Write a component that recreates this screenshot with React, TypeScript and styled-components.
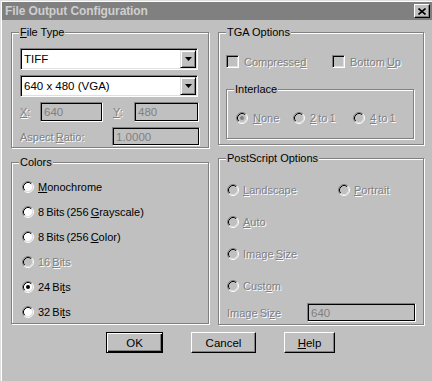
import styled, { createGlobalStyle } from "styled-components";

const GlobalStyle = createGlobalStyle`
  html, body {
    margin: 0;
    padding: 0;
    background: #c0c0c0;
    overflow: hidden;
  }
  body {
    font-family: "Liberation Sans", Arial, sans-serif;
    font-size: 11px;
    color: #000;
  }
`;

const Window = styled.div`
  width: 432px;
  height: 381px;
  box-sizing: border-box;
  background: #c0c0c0;
  border-left: 1px solid #dfdfdf;
  border-top: 1px solid #dfdfdf;
  box-shadow: inset 1px 1px 0 #fff;
  padding: 1px 0 0 1px;
  display: flex;
  flex-direction: column;
`;

const TitleBar = styled.div`
  height: 18px;
  flex-shrink: 0;
  background: #808080;
  display: flex;
  align-items: center;
  justify-content: space-between;
  padding: 0 2px 0 3px;
`;

const Title = styled.span`
  color: #cfcfcf;
  font-weight: bold;
  font-size: 12px;
  letter-spacing: -0.1px;
`;

const CloseButton = styled.div`
  width: 16px;
  height: 14px;
  box-sizing: border-box;
  background: #c0c0c0;
  border: 1px solid;
  border-color: #fff #000 #000 #fff;
  box-shadow: inset -1px -1px 0 #808080;
  display: flex;
  align-items: center;
  justify-content: center;
`;

const Body = styled.div`
  padding: 12px 0 0 9px;
  display: flex;
  flex-direction: column;
`;

const Columns = styled.div`
  display: grid;
  grid-template-columns: 198px 206px;
  column-gap: 9px;
`;

const Column = styled.div<{ $gap: number }>`
  display: flex;
  flex-direction: column;
  gap: ${(p) => p.$gap}px;
`;

const Group = styled.div<{ $h: number; $pad: string }>`
  position: relative;
  box-sizing: border-box;
  height: ${(p) => p.$h}px;
  padding: ${(p) => p.$pad};
  border: 1px solid #808080;
  box-shadow: inset 1px 1px 0 #fff, 1px 1px 0 #fff;
`;

const Legend = styled.span`
  position: absolute;
  top: -7px;
  left: 7px;
  padding: 0 1px;
  line-height: 13px;
  background: #c0c0c0;
  white-space: nowrap;
`;

const Label = styled.span<{ $disabled?: boolean }>`
  white-space: nowrap;
  word-spacing: -1px;
  color: ${(p) => (p.$disabled ? "#808080" : "#000")};
  text-shadow: ${(p) => (p.$disabled ? "1px 1px 0 #fff" : "none")};
`;

const FieldLabel = styled(Label)<{ $w: number }>`
  width: ${(p) => p.$w}px;
  flex-shrink: 0;
`;

const Select = styled.div`
  width: 178px;
  height: 22px;
  box-sizing: border-box;
  background: #fff;
  border: 1px solid;
  border-color: #808080 #fff #fff #808080;
  box-shadow: inset 1px 1px 0 #000, inset -1px -1px 0 #dfdfdf;
  padding: 1px 1px 1px 3px;
  display: flex;
  align-items: center;
  justify-content: space-between;
  font-size: 11.5px;
`;

const ArrowButton = styled.div`
  width: 16px;
  height: 18px;
  box-sizing: border-box;
  background: #c0c0c0;
  border: 1px solid;
  border-color: #dfdfdf #000 #000 #dfdfdf;
  box-shadow: inset 1px 1px 0 #fff, inset -1px -1px 0 #808080;
  display: flex;
  align-items: center;
  justify-content: center;
`;

const Stack = styled.div`
  display: flex;
  flex-direction: column;
  gap: 5px;
`;

const FieldRow = styled.div`
  display: flex;
  align-items: center;
`;

const TextField = styled.div<{ $w: number; $h: number }>`
  width: ${(p) => p.$w}px;
  height: ${(p) => p.$h}px;
  flex-shrink: 0;
  box-sizing: border-box;
  border: 1px solid;
  border-color: #808080 #fff #fff #808080;
  box-shadow: inset 1px 1px 0 #000, inset -1px -1px 0 #000;
  color: #808080;
  padding: 0 3px;
  display: flex;
  align-items: center;
  font-size: 11.5px;
`;

const RadioList = styled.div<{ $row: number }>`
  display: grid;
  grid-auto-rows: ${(p) => p.$row}px;
  align-items: center;
`;

const Option = styled.label<{ $gap: number; $w?: number }>`
  display: flex;
  align-items: center;
  gap: ${(p) => p.$gap}px;
  width: ${(p) => (p.$w ? `${p.$w}px` : "auto")};
  flex-shrink: 0;
`;

const OptionRow = styled.div<{ $h?: number }>`
  display: flex;
  align-items: center;
  height: ${(p) => (p.$h ? `${p.$h}px` : "auto")};
`;

const CheckBox = styled.span<{ $disabled?: boolean }>`
  width: 13px;
  height: 13px;
  box-sizing: border-box;
  flex-shrink: 0;
  background: ${(p) => (p.$disabled ? "#c0c0c0" : "#fff")};
  border: 1px solid;
  border-color: #808080 #fff #fff #808080;
  box-shadow: inset 1px 1px 0 #000, inset -1px -1px 0 #dfdfdf;
`;

const SubGroup = styled(Group)`
  margin-top: 21px;
  width: 188px;
`;

const ButtonRow = styled.div`
  display: flex;
  justify-content: center;
  gap: 28px;
  padding-top: 7px;
  padding-right: 2px;
`;

const Button = styled.div<{ $w: number; $default?: boolean }>`
  width: ${(p) => p.$w}px;
  height: 21px;
  box-sizing: border-box;
  background: #c0c0c0;
  border: 1px solid;
  border-color: ${(p) => (p.$default ? "#000" : "#fff #000 #000 #fff")};
  box-shadow: ${(p) =>
    p.$default
      ? "inset 1px 1px 0 #fff, inset -1px -1px 0 #000, inset -2px -2px 0 #808080"
      : "inset -1px -1px 0 #808080"};
  display: flex;
  align-items: center;
  justify-content: center;
  font-size: 11.5px;
`;

const Radio = ({ checked, disabled }: { checked?: boolean; disabled?: boolean }) => (
  <svg width="12" height="12" viewBox="0 0 12 12" style={{ flexShrink: 0 }}>
    <circle cx="6" cy="6" r="4.5" fill={disabled ? "#c0c0c0" : "#fff"} />
    <path d="M2.11 9.89 A5.5 5.5 0 0 1 9.89 2.11" stroke="#808080" fill="none" />
    <path d="M9.89 2.11 A5.5 5.5 0 0 1 2.11 9.89" stroke="#fff" fill="none" />
    <path d="M2.82 9.18 A4.5 4.5 0 0 1 9.18 2.82" stroke="#000" fill="none" />
    <path d="M9.18 2.82 A4.5 4.5 0 0 1 2.82 9.18" stroke="#dfdfdf" fill="none" />
    {checked && <circle cx="6" cy="6" r="2" fill={disabled ? "#808080" : "#000"} />}
  </svg>
);

const Arrow = () => (
  <svg width="7" height="4" viewBox="0 0 7 4">
    <path d="M0 0 H7 L3.5 4 Z" fill="#000" />
  </svg>
);

const CloseIcon = () => (
  <svg width="8" height="7" viewBox="0 0 8 7">
    <path d="M0.5 0.5 L7.5 6.5 M7.5 0.5 L0.5 6.5" stroke="#000" strokeWidth="1.6" />
  </svg>
);

const App = () => {
  return (
    <Window>
      <GlobalStyle />
      <TitleBar>
        <Title>File Output Configuration</Title>
        <CloseButton>
          <CloseIcon />
        </CloseButton>
      </TitleBar>
      <Body>
        <Columns>
          <Column $gap={14}>
            <Group $h={116} $pad="15px 0 0 8px">
              <Legend>
                <u>F</u>ile Type
              </Legend>
              <Stack>
                <Select>
                  <span>TIFF</span>
                  <ArrowButton>
                    <Arrow />
                  </ArrowButton>
                </Select>
                <Select>
                  <span>640 x 480 (VGA)</span>
                  <ArrowButton>
                    <Arrow />
                  </ArrowButton>
                </Select>
                <FieldRow>
                  <FieldLabel $w={20} $disabled>
                    <u>X</u>:
                  </FieldLabel>
                  <TextField $w={63} $h={20}>640</TextField>
                  <FieldLabel $w={21} $disabled style={{ marginLeft: 10 }}>
                    <u>Y</u>:
                  </FieldLabel>
                  <TextField $w={65} $h={20}>480</TextField>
                </FieldRow>
                <FieldRow>
                  <FieldLabel $w={92} $disabled>
                    Aspect <u>R</u>atio:
                  </FieldLabel>
                  <TextField $w={88} $h={19}>1.0000</TextField>
                </FieldRow>
              </Stack>
            </Group>
            <Group $h={162} $pad="11px 0 0 10px">
              <Legend>Colors</Legend>
              <RadioList $row={25}>
                <Option $gap={4}>
                  <Radio />
                  <Label>
                    <u>M</u>onochrome
                  </Label>
                </Option>
                <Option $gap={4}>
                  <Radio />
                  <Label>
                    8 Bits (256 <u>G</u>rayscale)
                  </Label>
                </Option>
                <Option $gap={4}>
                  <Radio />
                  <Label>
                    8 Bits (256 <u>C</u>olor)
                  </Label>
                </Option>
                <Option $gap={4}>
                  <Radio disabled />
                  <Label $disabled>
                    16 <u>B</u>its
                  </Label>
                </Option>
                <Option $gap={4}>
                  <Radio checked />
                  <Label>
                    24 Bi<u>t</u>s
                  </Label>
                </Option>
                <Option $gap={4}>
                  <Radio />
                  <Label>
                    32 Bi<u>t</u>s
                  </Label>
                </Option>
              </RadioList>
            </Group>
          </Column>
          <Column $gap={13}>
            <Group $h={113} $pad="22px 0 0 7px">
              <Legend>TGA Options</Legend>
              <OptionRow $h={13}>
                <Option $gap={5} $w={106}>
                  <CheckBox $disabled />
                  <Label $disabled>
                    Compresse<u>d</u>
                  </Label>
                </Option>
                <Option $gap={5}>
                  <CheckBox $disabled />
                  <Label $disabled>
                    Bottom <u>U</u>p
                  </Label>
                </Option>
              </OptionRow>
              <SubGroup $h={50} $pad="22px 0 0 9px">
                <Legend>Interlace</Legend>
                <OptionRow $h={12}>
                  <Option $gap={5} $w={57}>
                    <Radio checked disabled />
                    <Label $disabled>
                      <u>N</u>one
                    </Label>
                  </Option>
                  <Option $gap={5} $w={60}>
                    <Radio disabled />
                    <Label $disabled>
                      <u>2</u> to 1
                    </Label>
                  </Option>
                  <Option $gap={5}>
                    <Radio disabled />
                    <Label $disabled>
                      <u>4</u> to 1
                    </Label>
                  </Option>
                </OptionRow>
              </SubGroup>
            </Group>
            <Group $h={167} $pad="15px 0 0 8px">
              <Legend>PostScript Options</Legend>
              <RadioList $row={32}>
                <OptionRow>
                  <Option $gap={4} $w={111}>
                    <Radio disabled />
                    <Label $disabled>
                      <u>L</u>andscape
                    </Label>
                  </Option>
                  <Option $gap={4}>
                    <Radio disabled />
                    <Label $disabled>
                      <u>P</u>ortrait
                    </Label>
                  </Option>
                </OptionRow>
                <Option $gap={4}>
                  <Radio disabled />
                  <Label $disabled>
                    <u>A</u>uto
                  </Label>
                </Option>
                <Option $gap={4}>
                  <Radio disabled />
                  <Label $disabled>
                    Image <u>S</u>ize
                  </Label>
                </Option>
                <Option $gap={4}>
                  <Radio disabled />
                  <Label $disabled>
                    Cust<u>o</u>m
                  </Label>
                </Option>
              </RadioList>
              <FieldRow style={{ marginTop: 1 }}>
                <FieldLabel $w={80} $disabled>
                  Image Si<u>z</u>e
                </FieldLabel>
                <TextField $w={109} $h={19}>640</TextField>
              </FieldRow>
            </Group>
          </Column>
        </Columns>
        <ButtonRow>
          <Button $w={57} $default>
            OK
          </Button>
          <Button $w={65}>Cancel</Button>
          <Button $w={51}>
            <u>H</u>elp
          </Button>
        </ButtonRow>
      </Body>
    </Window>
  );
};

export default App;
